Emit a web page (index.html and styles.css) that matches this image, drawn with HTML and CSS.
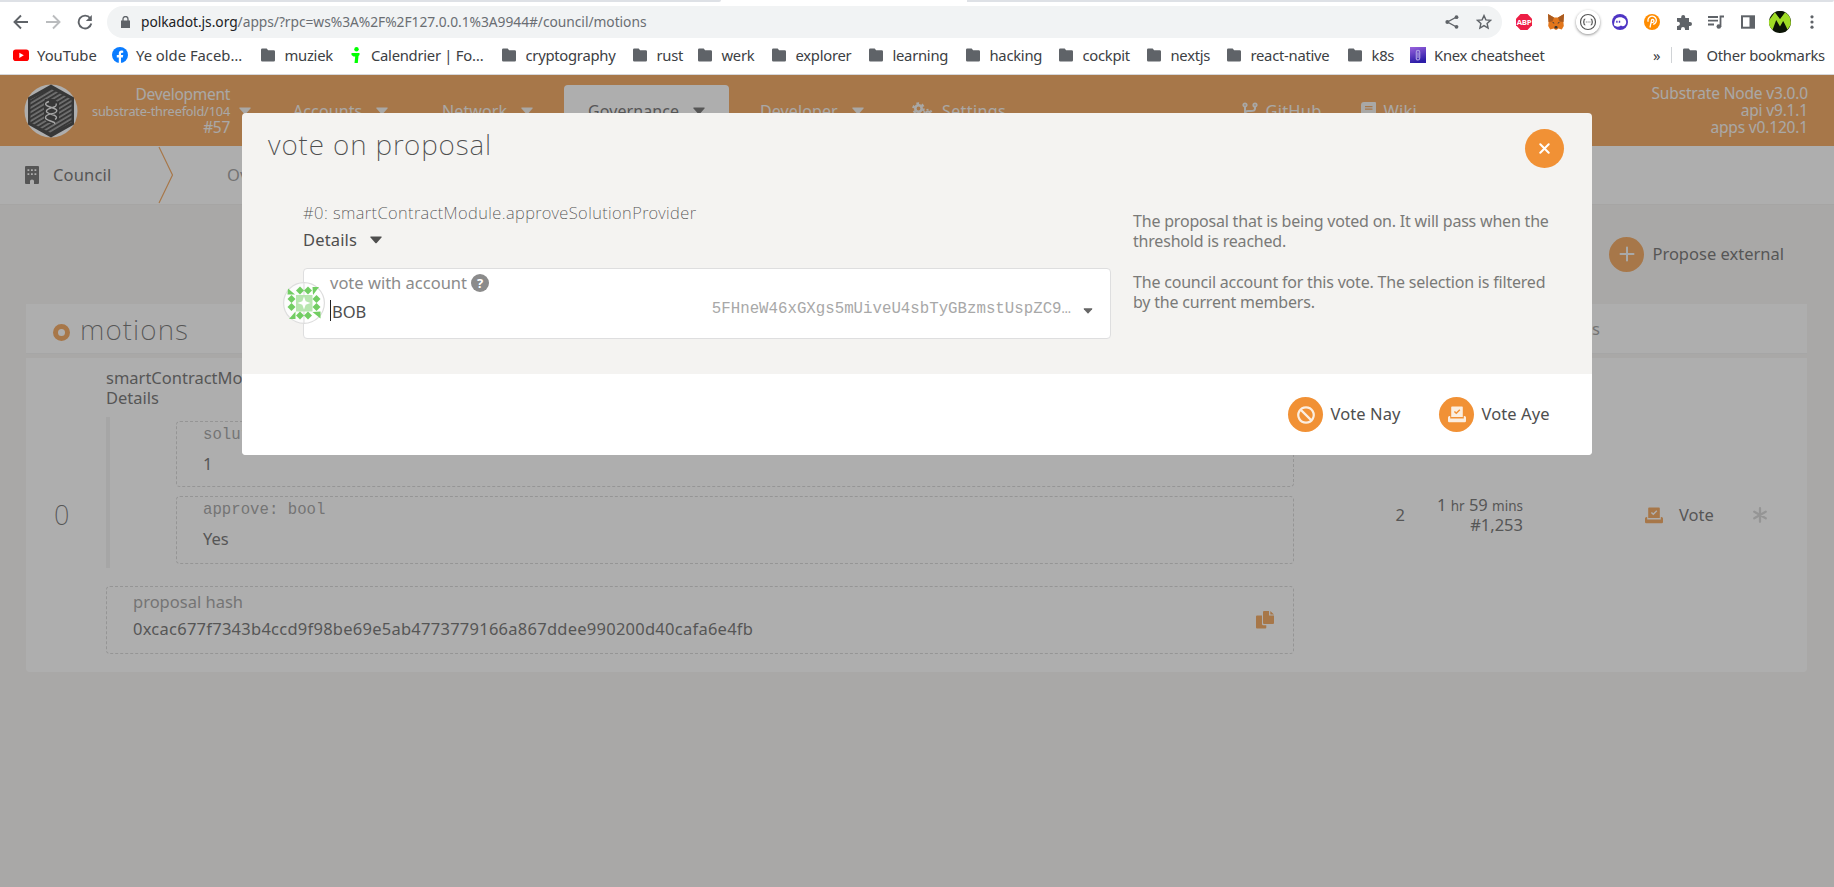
FILE: index.html
```html
<!DOCTYPE html>
<html lang="en">
<head>
<meta charset="utf-8">
<title>Council motions</title>
<link rel="stylesheet" href="styles.css">
</head>
<body>
<svg class="defs" aria-hidden="true">
  <symbol id="folder" viewBox="0 0 14 14"><path d="M1.300 .5h4.400l1.400 1.700h5.600Q14 2.200 14 3.600v8.600q0 1.300-1.300 1.300H1.300Q0 13.500 0 12.200V1.800Q0 .5 1.300.5z" fill="#5f6368"/></symbol>
  <symbol id="caret" viewBox="0 0 12 8"><path d="M.8.4h10.400q1 .2.300 1.200L6.700 7q-.7.7-1.400 0L.5 1.600Q-.2.600.8.400z" fill="currentColor"/></symbol>
  <symbol id="ballot" viewBox="0 0 18 17"><path fill="currentColor" fill-rule="evenodd" d="M4 .5h10q.8 0 .8.8V11H3.200V1.300Q3.200.5 4 .5zM8.300 8.300l4-4-1-1-3 3L6.900 4.900l-1 1z"/><path fill="currentColor" d="M0 11.500q0-1.500 1.500-1.500h.7v2.500h13.600V10h.7q1.500 0 1.500 1.500V15q0 1.200-1.200 1.200H1.200Q0 16.200 0 15z"/></symbol>
</svg>

<header class="browser">
  <div class="tabstrip"><i></i><i></i></div>
  <div class="toolbar">
    <svg class="nav-ico" viewBox="0 0 16 16"><path d="M15 8H2M8 1.500 1.500 8 8 14.500"/></svg>
    <svg class="nav-ico off" viewBox="0 0 16 16"><path d="M1 8h13M8 1.500 14.500 8 8 14.500"/></svg>
    <svg class="nav-ico" viewBox="0 0 16 16"><path d="M13.200 4.200A6.400 6.400 0 1 0 14.300 9.500"/><path d="M14.800 1v6H8.800z" class="solid"/></svg>
    <div class="omnibox">
      <svg class="lock" viewBox="0 0 9 12"><path d="M0 4.500h9V12H0z" fill="#5f6368"/><path d="M2 5V3a2.500 2.500 0 0 1 5 0v2" fill="none" stroke="#5f6368" stroke-width="1.300"/></svg>
      <span class="url"><b>polkadot.js.org</b>/apps/?rpc=ws%3A%2F%2F127.0.0.1%3A9944#/council/motions</span>
      <svg class="share" viewBox="0 0 14 14"><path d="M11.500 2 2.500 7l9 5" fill="none" stroke="#5f6368" stroke-width="1.400"/><g fill="#5f6368"><circle cx="11.500" cy="2.200" r="1.900"/><circle cx="2.300" cy="7" r="1.900"/><circle cx="11.500" cy="11.800" r="1.900"/></g></svg>
      <svg class="star" viewBox="0 0 16 16"><path d="m8 1.600 1.900 4.300 4.700.4-3.500 3.100 1 4.600L8 11.600 3.900 14l1-4.600L1.400 6.300l4.700-.4z" fill="none" stroke="#5f6368" stroke-width="1.400"/></svg>
    </div>
    <div class="exts">
      <svg viewBox="0 0 24 24"><path d="M8.500 4h7l4.500 4.700v6.600L15.500 20h-7L4 15.300V8.700z" fill="#ed1e45"/><text x="12" y="14.900" font-size="7.800" font-weight="bold" fill="#fff" text-anchor="middle" letter-spacing="-.4">ABP</text></svg>
      <svg viewBox="0 0 24 24"><path d="m4 4 6 3.500h4L20 4l-.6 8 .4 4-2 3.500-3.500-1-1.500 1.300h-1.600l-1.500-1.300-3.500 1-2-3.500.4-4z" fill="#e2761b"/><path d="m4 4 6 3.500-1.500 4-4 .5zM20 4l-6 3.500 1.500 4 4 .5z" fill="#a85a20"/><path d="m10.300 17 .5 1.500h2.400l.5-1.500-1-1h-1.400z" fill="#393430"/><path d="m8 12 2 .5.300 1.500zM16 12l-2 .5-.3 1.500z" fill="#233447"/></svg>
      <svg viewBox="0 0 24 24" class="raised"><circle cx="12" cy="12" r="12" fill="#fff"/><circle cx="12" cy="12" r="7.500" fill="none" stroke="#555" stroke-width="1.200"/><path d="M9.300 9q-1.300 0-1.300 1.200v.8q0 1-.9 1 .9 0 .9 1v.8Q8 15 9.300 15M14.700 9q1.300 0 1.300 1.200v.8q0 1 .9 1-.9 0-.9 1v.8q0 1.200-1.300 1.200" fill="none" stroke="#555" stroke-width="1.200"/><path d="M9.800 12h4.600" stroke="#777" stroke-dasharray="1 .8"/></svg>
      <svg viewBox="0 0 24 24"><circle cx="12" cy="12" r="8" fill="#4e35c4"/><path d="M5.900 15.300C6.600 12 6.300 8 11 7.300c4-.6 7.500 2 7.200 5.200-.3 3.300-3.400 4.600-5.200 3-2.500 1.600-4.700 1.600-7.100-.2z" fill="#fff"/><path d="M8.900 10.700v2M11.500 10.700v2" stroke="#4e35c4" stroke-width="1.400"/></svg>
      <svg viewBox="0 0 24 24"><circle cx="12" cy="12" r="8" fill="#ff8c00"/><path d="M8.200 11.800a4.200 4.200 0 1 1 5 2.600M11.700 9.300l-1.700 8.200M11 12.500q3 .3 3-1.700-.3-1.700-2.300-1.200" fill="none" stroke="#fff" stroke-width="1.300"/></svg>
      <svg viewBox="0 0 24 24"><path d="M5 8h4.200V7a2 2 0 1 1 4 0v1H17v4h1a2 2 0 1 1 0 4h-1v4h-4v-1a2 2 0 0 0-4 0v1H5v-4h.8a2 2 0 0 0 0-4.300H5z" fill="#5f6368"/></svg>
      <svg viewBox="0 0 24 24"><path d="M4 7h10M4 10.700h10M4 14.500h6M16.500 17V6.500H20" fill="none" stroke="#5f6368" stroke-width="1.800"/><circle cx="14.800" cy="16.500" r="2.300" fill="#5f6368"/></svg>
      <svg viewBox="0 0 24 24"><path d="M5 5.300h14v13.400H5z" fill="#5f6368"/><path d="M7 7.300h6.500v9.400H7z" fill="#fff"/></svg>
      <svg viewBox="0 0 24 24"><circle cx="12" cy="12" r="11" fill="#0b1405"/><path d="M7 2.500 12 12l1.800-3.500L16.800 14 19.500 19.500 22.600 15Q24 6.500 17 2.500L12 9zM7 2.200 1.200 10q-.8 3 .6 6.500L4.500 20 8.200 10l3.800 6.500L15.700 10l3.600 9.500 3-4.500L17 2.200 12 11.500z" fill="#9fdc25"/><path d="m7.500 2 4.500 6.500L16.500 2q-4.500-2-9 0z" fill="#0b1405"/></svg>
      <svg viewBox="0 0 24 24"><g fill="#5f6368"><circle cx="12" cy="6.800" r="1.600"/><circle cx="12" cy="12" r="1.600"/><circle cx="12" cy="17.200" r="1.600"/></g></svg>
    </div>
  </div>
  <nav class="bookmarks">
    <a class="wide"><svg class="fav" viewBox="0 0 16 16"><rect y="2.500" width="16" height="11.500" rx="2.800" fill="#f00"/><path d="M6.300 5.700v5.200l4.500-2.600z" fill="#fff"/></svg>YouTube</a>
    <a class="wide"><svg class="fav" viewBox="0 0 16 16"><circle cx="8" cy="8" r="8" fill="#0a7cff"/><path d="M6.800 16v-5.500h-2V8h2V6.500q0-3 2.900-3 .8 0 1.500.2v2H10q-1 0-1 1V8h2.200l-.4 2.500H9V16z" fill="#fff"/></svg>Ye olde Faceb…</a>
    <a><svg class="dir"><use href="#folder"/></svg>muziek</a>
    <a><svg class="person" viewBox="0 0 11 16"><circle cx="6.500" cy="2.200" r="2.200" fill="#0f0"/><path d="M1.500 6h8v2l-1 1-.7 7H4.500l.7-6.500H3.500L1.500 8z" fill="#0f0"/></svg>Calendrier | Fo…</a>
    <a><svg class="dir"><use href="#folder"/></svg>cryptography</a>
    <a><svg class="dir"><use href="#folder"/></svg>rust</a>
    <a><svg class="dir"><use href="#folder"/></svg>werk</a>
    <a><svg class="dir"><use href="#folder"/></svg>explorer</a>
    <a><svg class="dir"><use href="#folder"/></svg>learning</a>
    <a><svg class="dir"><use href="#folder"/></svg>hacking</a>
    <a><svg class="dir"><use href="#folder"/></svg>cockpit</a>
    <a><svg class="dir"><use href="#folder"/></svg>nextjs</a>
    <a><svg class="dir"><use href="#folder"/></svg>react-native</a>
    <a><svg class="dir"><use href="#folder"/></svg>k8s</a>
    <a><svg class="fav" viewBox="0 0 16 16"><defs><linearGradient id="kx" x1="0" y1="0" x2=".3" y2="1"><stop stop-color="#9a63dd"/><stop offset="1" stop-color="#2d1da8"/></linearGradient></defs><path d="M0 0h16v16H0z" fill="url(#kx)"/><path d="M6.300 12V5q0-1.700 1.700-1.700T9.700 5v6q0 2-1.700 2t-1.700-2M8 5.500v5.500" fill="none" stroke="#a99ae0" stroke-width="1.200"/></svg>Knex cheatsheet</a>
    <span class="more">»</span>
    <a class="other"><svg class="dir"><use href="#folder"/></svg>Other bookmarks</a>
  </nav>
</header>

<main class="app">
  <div class="topbar">
    <svg class="chain-logo" viewBox="0 0 54 54"><defs><pattern id="hatch" width="10" height="3.800" patternUnits="userSpaceOnUse" patternTransform="rotate(-31)"><path d="M0 1h10" stroke="#ddd" stroke-width="1"/></pattern></defs><circle cx="27" cy="27" r="26.500" fill="#fff"/><path d="M27 .5 50 13.500v27L27 53.500 4 40.500v-27z" fill="#111"/><path d="M27 5 47.500 15.500v23L27 49 6.500 38.500v-23z" fill="url(#hatch)"/><path d="M21 15h9l5 4v17l-5 3h-6l-4-4V19z" fill="#111"/><path d="M25 17.500c-6 2-3 4.500 1 5.500 5 1.500 9 3 5.500 5.500-3 2-10 1-10 5 0 2 2 2.500 5 3.500s5 1.500 4 3M32 19.500c2 4-5 3.500-8.500 6-3 2.500 1 4 4.500 5 4 1 6 3 3 5" fill="none" stroke="#eee" stroke-width="1.400"/></svg>
    <div class="chain"><div>Development</div><div class="spec">substrate-threefold/104</div><div>#57</div></div>
    <svg class="caret"><use href="#caret"/></svg>
    <nav class="menu">
      <a>Accounts<svg class="caret"><use href="#caret"/></svg></a>
      <a>Network<svg class="caret"><use href="#caret"/></svg></a>
      <a class="active">Governance<svg class="caret"><use href="#caret"/></svg></a>
      <a>Developer<svg class="caret"><use href="#caret"/></svg></a>
      <a class="withico"><svg width="21" height="18" viewBox="0 0 21 18"><g fill="none" stroke="currentColor"><circle cx="6.500" cy="6.500" r="3.200" stroke-width="2.600"/><circle cx="6.500" cy="6.500" r="5.200" stroke-width="2.200" stroke-dasharray="2.700 2.740"/><circle cx="16" cy="11.500" r="2" stroke-width="2"/><circle cx="16" cy="11.500" r="3.800" stroke-width="1.700" stroke-dasharray="2 1.980"/></g></svg>Settings</a>
    </nav>
    <nav class="links">
      <a><svg width="16" height="18" viewBox="0 0 16 18"><path d="M3 4v10M13 5v1.500Q13 9 9 9H6q-3 0-3 3" fill="none" stroke="currentColor" stroke-width="2"/><g fill="none" stroke="currentColor" stroke-width="1.800"><circle cx="3" cy="3" r="1.700"/><circle cx="13" cy="3" r="1.700"/><circle cx="3" cy="15" r="1.700"/></g></svg>GitHub</a>
      <a><svg width="15" height="17" viewBox="0 0 15 17"><path fill="currentColor" fill-rule="evenodd" d="M3 0h11q1 0 1 1v11q0 1-1 1v2q1 0 1 1t-1 1H3q-3 0-3-3V3q0-3 3-3zM4 4v1.200h7.500V4zm0 2.500v1.200h7.500V6.500z"/></svg>Wiki</a>
    </nav>
    <div class="versions"><div>Substrate Node v3.0.0</div><div>api v9.1.1</div><div>apps v0.120.1</div></div>
  </div>

  <div class="tabs">
    <svg class="building" viewBox="0 0 14 18"><path fill="currentColor" fill-rule="evenodd" d="M1 0h12q1 0 1 1v16q0 1-1 1H9v-3q0-1.500-2-1.500T5 15v3H1q-1 0-1-1V1q0-1 1-1zM2.500 3.200v1.700h1.800V3.200zM6 3.200v1.700h1.800V3.200zm3.500 0v1.700h1.800V3.200zm-7 4v1.700h1.800V7.200zM6 7.200v1.700h1.800V7.200zm3.500 0v1.700h1.800V7.200z"/></svg>
    <span class="section">Council</span>
    <svg class="chevron" viewBox="0 0 16 58"><path d="M1 1 14.500 29 1 57" fill="none" stroke="#f19135" stroke-width="1.200"/></svg>
    <span class="tab">Overview</span>
  </div>

  <div class="actions">
    <span class="round"><svg width="16" height="16" viewBox="0 0 16 16"><path d="M8 1.500v13M1.500 8h13" stroke="#f5f4f3" stroke-width="2" stroke-linecap="round"/></svg></span>
    <span>Propose external</span>
  </div>

  <section class="table">
    <div class="thead"><span class="dot"></span><h1>motions</h1><span class="votes">votes</span></div>
    <div class="row">
      <div class="index">0</div>
      <div class="proposal">
        <div class="call">smartContractModule.approveSolutionProvider</div>
        <div class="call">Details</div>
        <div class="params">
          <div class="field first"><label>solution_provider_id: u64</label><p>1</p></div>
          <div class="field"><label>approve: bool</label><p>Yes</p></div>
        </div>
        <div class="field hash"><div><label>proposal hash</label><p>0xcac677f7343b4ccd9f98be69e5ab4773779166a867ddee990200d40cafa6e4fb</p></div>
          <svg class="copy" viewBox="0 0 18 18"><path fill="currentColor" d="M1 4.500h5V13q0 1.300 1.300 1.300h3v2.200q0 1-1 1H1q-1 0-1-1v-11q0-1 1-1zM8 0h5v4.500h5V12q0 1-1 1H8q-1 0-1-1V1q0-1 1-1zM14.300 0 18 3.600h-3.700z"/></svg>
        </div>
      </div>
      <div class="threshold">2</div>
      <div class="ends"><div>1 <small>hr</small> 59 <small>mins</small></div><div>#1,253</div></div>
      <div class="vote"><svg class="ballot"><use href="#ballot"/></svg>Vote</div>
      <svg class="asterisk" viewBox="0 0 14 16"><path d="M7 1.200v13.600M1.300 4.700l11.400 6.600M12.700 4.700 1.300 11.300" stroke="#ccc" stroke-width="2.300" stroke-linecap="round"/></svg>
    </div>
  </section>
  <div class="dimmer"></div>
</main>

<div class="modal" role="dialog">
  <div class="modal-head"><h2>vote on proposal</h2><span class="round close"><svg width="11" height="11" viewBox="0 0 11 11"><path d="m1.300 1.300 8.400 8.400M9.700 1.300 1.300 9.700" stroke="#fff" stroke-width="2" stroke-linecap="round"/></svg></span></div>
  <div class="modal-body">
    <div class="left">
      <div class="title">#0: smartContractModule.approveSolutionProvider</div>
      <div class="details">Details<svg class="caret"><use href="#caret"/></svg></div>
      <div class="select">
        <svg class="identicon" viewBox="0 0 42 42"><circle cx="21" cy="21" r="20.400" fill="#fff" fill-opacity=".75" stroke="#ddd" stroke-width="1.200"/><path d="M21 0v42" stroke="#ddd"/><path d="M13 13h16.500v16.500H13z" fill="#b8e6b0"/><path d="m21 14.500 1.700 4.800 4.800 1.700-4.800 1.700L21 27.500l-1.700-4.800-4.800-1.700 4.800-1.700z" fill="#fff"/><path fill="#72cd63" d="m17 4.500 4 4 4-4 4 4-4 4-4-4-4 4-4-4zM17 29.500l4 4 4-4 4 4-4 4-4-4-4 4-4-4zM8.500 13l4 4-4 4 4 4-4 4-4-4 4-4-4-4zM33.500 13l4 4-4 4 4 4-4 4-4-4 4-4-4-4zM5 6.500l7 6H4.500zM29.500 5h6.500l-6 8zM37.500 29.500v7l-8-6.500zM12.500 29.500v7.500H6z"/></svg>
        <div class="who"><div class="lab">vote with account <i>?</i></div><div class="name"><span class="cursor"></span>BOB</div></div>
        <code>5FHneW46xGXgs5mUiveU4sbTyGBzmstUspZC9…</code>
        <svg class="caret small"><use href="#caret"/></svg>
      </div>
    </div>
    <div class="help">
      <p>The proposal that is being voted on. It will pass when the<br>threshold is reached.</p>
      <p>The council account for this vote. The selection is filtered<br>by the current members.</p>
    </div>
  </div>
  <div class="modal-foot">
    <span class="round"><svg width="18" height="18" viewBox="0 0 18 18"><path d="M9 1.300a7.700 7.700 0 1 0 .01 0M3.600 3.600l10.800 10.800" fill="none" stroke="#fbeee0" stroke-width="2.200"/></svg></span><span class="nay">Vote Nay</span>
    <span class="round"><svg class="ballot pale"><use href="#ballot"/></svg></span><span class="aye">Vote Aye</span>
  </div>
</div>
</body>
</html>
```
FILE: styles.css
```css
* { box-sizing: border-box; }
html { overflow: hidden; }
body { margin: 0; width: 1834px; height: 887px; overflow: hidden; position: relative; font: 16.500px/20px "Noto Sans", sans-serif; color: #4e4e4e; background: #fff; }
h1, h2, p { margin: 0; font-weight: 200; }
svg { display: block; flex: none; }
.defs { position: absolute; width: 0; height: 0; }
.caret { width: 12px; height: 8px; }

.browser { height: 75px; border-bottom: 1px solid #d5d7da; background: #fff; }
.tabstrip { height: 2px; display: flex; justify-content: space-between; }
.tabstrip i { background: #dee1e6; width: 721px; border-bottom-right-radius: 2px; }
.tabstrip i + i { width: 867px; }
.toolbar { display: flex; align-items: center; height: 40px; padding-left: 13px; }
.nav-ico { width: 16px; height: 16px; margin-right: 16px; fill: none; stroke: #5f6368; stroke-width: 1.900; }
.nav-ico.off { stroke: #babcbe; }
.nav-ico .solid { fill: #5f6368; stroke: none; }
.omnibox { width: 1395px; height: 32px; margin-left: -2px; border-radius: 16px; background: #f1f3f4; display: flex; align-items: center; padding: 0 10px 0 14px; }
.lock { width: 9px; height: 12px; margin-right: 11px; }
.url { font-size: 13.800px; letter-spacing: -.045px; color: #6a6e73; flex: 1; white-space: nowrap; }
.url b { font-weight: 400; color: #202124; }
.share { width: 14px; height: 14px; margin-right: 17px; }
.star { width: 16px; height: 16px; }
.exts { display: flex; gap: 8px; margin-left: 10px; font-family: "Open Sans", sans-serif; }
.exts svg { width: 24px; height: 24px; }
.exts .raised { border-radius: 50%; box-shadow: 0 1px 3px rgba(0,0,0,.45); }
.bookmarks { display: grid; grid-template-columns: 99px 149px 89px 152px 131px 65px 74px 97px 97px 93px 88px 80px 121px 62px 243px 18px auto; height: 28px; align-items: center; padding: 0 0 2px 13px; font-size: 14.800px; letter-spacing: -.27px; color: #3c4043; white-space: nowrap; }
.bookmarks a { display: flex; align-items: center; }
.bookmarks .wide { letter-spacing: 0; }
.fav { width: 16px; height: 16px; margin-right: 8px; }
.dir { width: 14px; height: 14px; margin-right: 9.500px; }
.person { width: 11px; height: 16px; margin-right: 10px; }
.other { border-left: 1px solid #d0d3d6; height: 16px; padding-left: 11px; }

.app { position: relative; height: 812px; background: #f5f3f1; }
.dimmer { position: absolute; inset: 0; background: rgba(94,94,94,.5); }
.topbar { height: 71px; background: #f19135; color: #f5f2ef; display: flex; align-items: center; padding: 0 26px 0 24px; }
.chain-logo { width: 54px; height: 54px; }
.chain { width: 152px; text-align: right; font-size: 15.500px; letter-spacing: -.3px; line-height: 17px; margin-right: 9px; }
.chain .spec { font-size: 12.800px; letter-spacing: -.21px; line-height: 16px; }
.menu { display: grid; grid-template-columns: 149px 122px 196px 152px auto; height: 51px; align-self: flex-end; margin-left: 42px; }
.menu a { height: 51px; display: flex; align-items: center; gap: 14px; }
.topbar .menu { margin-bottom: 10px; }
.menu .active { background: #fff; color: #4e4e4e; border-radius: 4px 4px 0 0; width: 165px; padding-left: 24px; }
.menu .withico { gap: 9px; letter-spacing: .4px; }
.menu, .links { font-size: 16px; letter-spacing: .1px; }
.links { display: flex; gap: 39px; margin-left: auto; font-size: 16.500px; letter-spacing: .2px; }
.links a { display: flex; align-items: center; gap: 8px; }
.versions { width: 391px; text-align: right; font-size: 15.500px; letter-spacing: -.17px; line-height: 17px; }
.tabs { height: 58px; background: #fff; display: flex; align-items: center; padding-left: 25px; box-shadow: 0 1px 0 #eeecea; }
.building { width: 14px; height: 18px; }
.section { margin-left: 14px; width: 105px; letter-spacing: .15px; }
.chevron { width: 16px; height: 58px; }
.tab { margin-left: 53px; color: #888; }
.actions { display: flex; align-items: center; justify-content: flex-end; gap: 8px; height: 100px; padding-right: 50px; }
.round { width: 35px; height: 35px; border-radius: 50%; background: #f19135; display: flex; align-items: center; justify-content: center; }
.table { margin: 0 27px 0 26px; }
.thead { height: 50px; background: #fff; border-bottom: 1px solid #eee; display: flex; align-items: center; padding-left: 27px; }
.dot { width: 17px; height: 17px; border: 5.500px solid #f19135; border-radius: 50%; margin-top: 7px; }
h1 { font-size: 28px; line-height: 36px; margin: 1px 0 0 10px; letter-spacing: 1.100px; }
.votes { margin-left: auto; padding-right: 207px; color: #888; }
.row { margin-top: 4px; height: 314px; background: #fff; border-radius: 0 0 4px 4px; display: flex; align-items: center; }
.index { width: 80px; padding-left: 28px; font-size: 27px; font-weight: 200; }
.proposal { width: 1188px; align-self: flex-start; padding-top: 10px; }
.params { border-left: 4px solid #eee; height: 151px; margin: 9px 0 18px; padding: 4px 0 0 66px; }
.field { border: 1px dashed #ccc; border-radius: 4px; height: 68px; padding: 3px 26px; }
.field.first { height: 66px; margin-bottom: 9px; }
.field label { display: block; color: #8b8b8b; font: 15.700px/20px "Liberation Mono", monospace; }
.field p { font-weight: 400; margin-top: 9px; }
.field.hash { display: flex; justify-content: space-between; align-items: center; padding: 2px 19px 12px 26px; }
.hash label { font: inherit; }
.hash p { margin-top: 7px; letter-spacing: .255px; }
.copy { width: 18px; height: 18px; color: #f19135; margin-top: 9px; }
.threshold { width: 111px; text-align: right; }
.ends { width: 118px; text-align: right; line-height: 20.500px; }
.ends > div { height: 20.500px; }
.ends small { font-size: 13.500px; }
.vote { display: flex; align-items: center; gap: 16px; margin-left: 122px; width: 108px; }
.ballot { width: 18px; height: 17px; color: #f19135; }
.pale { color: #fbeee0; }
.asterisk { width: 14px; height: 16px; }

.modal { position: absolute; left: 242px; top: 113px; width: 1350px; height: 342px; border-radius: 4px; overflow: hidden; background: #f4f3f1; display: flex; flex-direction: column; }
.modal-head { display: flex; justify-content: space-between; align-items: flex-start; height: 87px; padding: 16px 28px 0 26px; }
h2 { font-size: 28px; line-height: 36px; margin-top: -3px; letter-spacing: .9px; }
.close { width: 39px; height: 39px; }
.modal-body { display: flex; height: 174px; padding-left: 61px; }
.left { width: 808px; margin-right: 22px; }
.title { font-weight: 200; line-height: 26px; letter-spacing: .44px; }
.details { display: flex; align-items: center; gap: 13px; line-height: 28px; margin-bottom: 14px; letter-spacing: .15px; }
.select { position: relative; height: 71px; border: 1px solid #dededf; border-radius: 4px; background: #fff; display: flex; align-items: center; padding-left: 26px; }
.identicon { position: absolute; left: -21px; top: 13px; width: 42px; height: 42px; }
.who { flex: 1; padding-bottom: 12px; }
.lab { color: #8b8b8b; display: flex; align-items: center; gap: 4px; }
.lab i { width: 18px; height: 18px; border-radius: 50%; background: #8b8b8b; color: #fff; font: bold 13px/18px "Noto Sans", sans-serif; text-align: center; }
.name { display: flex; align-items: center; margin-top: 9px; }
.cursor { width: 1px; height: 21px; margin: -4px 1px 0 0; background: #222; }
.select code { font: 15.750px/20px "Liberation Mono", monospace; color: #a8a8a8; margin: 10px 12px 0 0; }
.small { width: 10px; height: 6px; margin: 14px 17px 0 0; color: #666; }
.help { padding-top: 11px; color: #7a7a78; font-size: 16px; letter-spacing: -.2px; line-height: 20.300px; white-space: nowrap; }
.help p { font-weight: 400; margin-bottom: 20px; }
.modal-foot { background: #fff; flex: 1; display: flex; align-items: center; padding-left: 1046px; }
.nay, .aye { margin-left: 7.500px; width: 108.500px; letter-spacing: .1px; margin-top: -1px; }
.modal-foot .aye { width: auto; }
```
